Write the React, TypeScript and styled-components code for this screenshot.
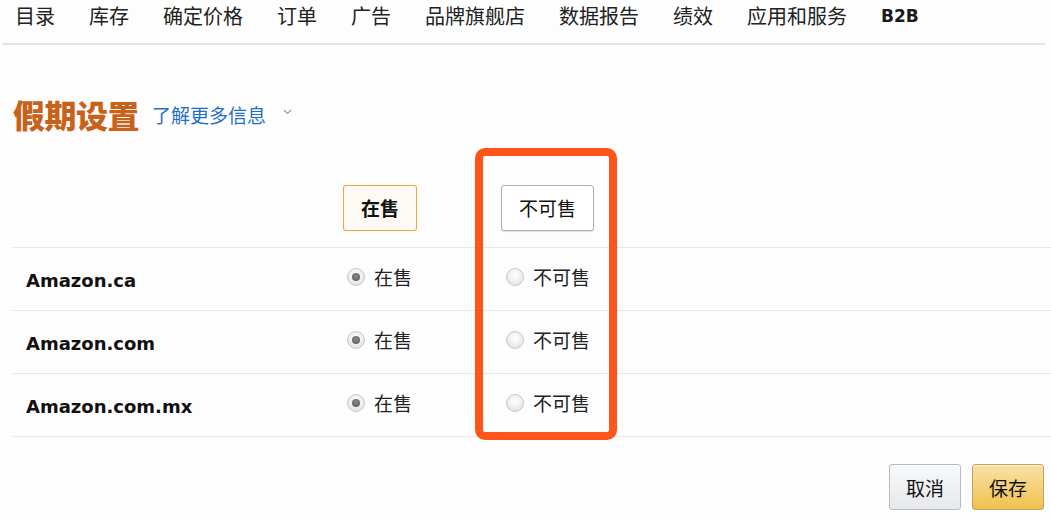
import React from "react";
import styled, { createGlobalStyle } from "styled-components";

const GlobalStyle = createGlobalStyle`
  html, body { margin: 0; padding: 0; background: #fdfdfd; }
  body {
    font-family: "Noto Sans CJK SC", "Noto Sans", sans-serif;
    color: #111;
    width: 1051px;
    height: 519px;
    overflow: hidden;
  }
`;

const Page = styled.div`
  display: flex;
  flex-direction: column;
  width: 1051px;
`;

const Nav = styled.nav`
  display: flex;
  align-items: center;
  gap: 34px;
  height: 43px;
  margin: 0 6px 0 2px;
  padding-left: 13px;
  border-bottom: 2px solid #e4e4e4;
`;

const NavItem = styled.span<{ $latin?: boolean }>`
  font-size: 20px;
  line-height: 32px;
  margin-top: -11px;
  color: #222;
  white-space: nowrap;
  ${(p) =>
    p.$latin &&
    `font-family: "DejaVu Sans", sans-serif; font-weight: bold; font-size: 17px; color:#1a1a1a;`}
`;

const TitleRow = styled.div`
  display: flex;
  align-items: center;
  margin: 51px 0 0 13px;
  height: 36px;
`;

const Title = styled.h1`
  margin: 0;
  font-size: 32px;
  line-height: 36px;
  font-weight: 900;
  color: #c8621a;
  letter-spacing: -0.5px;
`;

const LearnMore = styled.a`
  margin-left: 13px;
  font-size: 19px;
  line-height: 24px;
  color: #1f6fc2;
  text-decoration: none;
  margin-top: 2px;
`;

const Chevron = styled.svg`
  margin-left: 17px;
  margin-top: -4px;
`;

const Table = styled.div`
  position: relative;
  margin: 16px 0 0 13px;
  display: flex;
  flex-direction: column;
`;

const Row = styled.div<{ $header?: boolean }>`
  display: grid;
  grid-template-columns: 330px 158px 1fr;
  align-items: center;
  height: ${(p) => (p.$header ? "99px" : "62px")};
  border-bottom: 1px solid #e6e6e6;
`;

const HeaderCell = styled.div`
  display: flex;
  align-items: flex-end;
  padding-bottom: 16px;
  height: 100%;
  box-sizing: border-box;
`;

const HeaderButton = styled.button<{ $active?: boolean }>`
  height: 46px;
  padding: 0 17px;
  font-family: "Noto Sans CJK SC", sans-serif;
  font-size: 19px;
  line-height: 44px;
  color: #111;
  font-weight: ${(p) => (p.$active ? 700 : 400)};
  border-radius: 3px;
  background: ${(p) => (p.$active ? "#fdf9f3" : "#fff")};
  border: 1px solid ${(p) => (p.$active ? "#eaa64c" : "#b0b0b0")};
  box-shadow: ${(p) => (p.$active ? "0 0 1px #f3c98f" : "0 1px 1px rgba(0,0,0,0.12)")};
  cursor: pointer;
`;

const Marketplace = styled.div`
  padding-left: 13px;
  font-family: "DejaVu Sans", sans-serif;
  font-weight: bold;
  font-size: 18px;
  color: #111;
  margin-top: 3px;
`;

const RadioLabel = styled.label<{ $indent: number }>`
  display: flex;
  align-items: center;
  gap: 9px;
  padding-left: ${(p) => p.$indent}px;
  font-size: 19px;
  line-height: 24px;
  color: #222;
  margin-top: -4px;
`;

const RadioDot = styled.span<{ $checked?: boolean }>`
  width: 18px;
  height: 18px;
  border-radius: 50%;
  box-sizing: border-box;
  border: 1px solid #c9c9c9;
  background: radial-gradient(circle at 50% 40%, #ffffff 0%, #f1f1f1 45%, #d9d9d9 100%);
  display: flex;
  align-items: center;
  justify-content: center;
  &::after {
    content: "";
    display: ${(p) => (p.$checked ? "block" : "none")};
    width: 8px;
    height: 8px;
    border-radius: 50%;
    background: radial-gradient(circle at 50% 40%, #8a8a8a, #555);
  }
`;

const Highlight = styled.div`
  position: absolute;
  left: 462px;
  top: 0;
  width: 142px;
  height: 292px;
  box-sizing: border-box;
  border: 8px solid #ff551b;
  border-radius: 10px;
  pointer-events: none;
`;

const Actions = styled.div`
  display: flex;
  justify-content: flex-end;
  gap: 11px;
  margin: 27px 7px 0 0;
`;

const ActionButton = styled.button<{ $primary?: boolean }>`
  width: 72px;
  height: 46px;
  font-family: "Noto Sans CJK SC", sans-serif;
  font-size: 19px;
  color: #111;
  border-radius: 3px;
  border: 1px solid ${(p) => (p.$primary ? "#c9a257" : "#b7bbc1")};
  background: ${(p) =>
    p.$primary
      ? "linear-gradient(to bottom, #f8e1a8, #f1c14e)"
      : "linear-gradient(to bottom, #f8f9fb, #e6e8eb)"};
  box-shadow: 0 1px 0 rgba(255,255,255,0.6) inset;
  cursor: pointer;
  padding: 0;
`;

const navItems = ["目录", "库存", "确定价格", "订单", "广告", "品牌旗舰店", "数据报告", "绩效", "应用和服务"];
const markets = ["Amazon.ca", "Amazon.com", "Amazon.com.mx"];

export default function App() {
  return (
    <Page>
      <GlobalStyle />
      <Nav>
        {navItems.map((n) => (
          <NavItem key={n}>{n}</NavItem>
        ))}
        <NavItem $latin>B2B</NavItem>
      </Nav>
      <TitleRow>
        <Title>假期设置</Title>
        <LearnMore href="#">了解更多信息</LearnMore>
        <Chevron width="9" height="6" viewBox="0 0 9 6">
          <path d="M1 1 L4.5 4.5 L8 1" fill="none" stroke="#9a9a9a" strokeWidth="1.2" />
        </Chevron>
      </TitleRow>
      <Table>
        <Row $header>
          <HeaderCell />
          <HeaderCell>
            <HeaderButton $active>在售</HeaderButton>
          </HeaderCell>
          <HeaderCell>
            <HeaderButton>不可售</HeaderButton>
          </HeaderCell>
        </Row>
        {markets.map((m) => (
          <Row key={m}>
            <Marketplace>{m}</Marketplace>
            <RadioLabel $indent={4}>
              <RadioDot $checked />
              在售
            </RadioLabel>
            <RadioLabel $indent={5}>
              <RadioDot />
              不可售
            </RadioLabel>
          </Row>
        ))}
        <Highlight />
      </Table>
      <Actions>
        <ActionButton>取消</ActionButton>
        <ActionButton $primary>保存</ActionButton>
      </Actions>
    </Page>
  );
}
